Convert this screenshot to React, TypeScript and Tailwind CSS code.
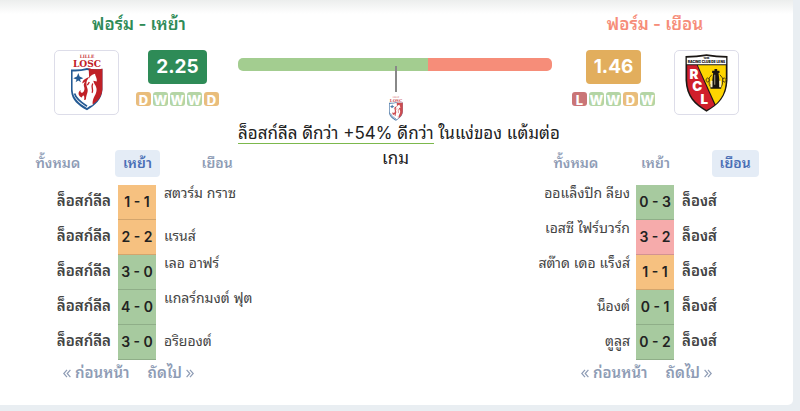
import React, { useState } from 'react';
import clsx from 'clsx';

type Result = 'W' | 'D' | 'L';

interface Match {
  opponent: string;
  score: string;
  result: Result;
  // two-word names sit at the top of the row
  top?: boolean;
}

const homeMatches: Match[] = [
  { opponent: 'สตวร์ม กราซ', score: '1 - 1', result: 'D', top: true },
  { opponent: 'แรนส์', score: '2 - 2', result: 'D' },
  { opponent: 'เลอ อาฟร์', score: '3 - 0', result: 'W', top: true },
  { opponent: 'แกลร์กมงต์ ฟุต', score: '4 - 0', result: 'W', top: true },
  { opponent: 'อริยองต์', score: '3 - 0', result: 'W' },
];

const awayMatches: Match[] = [
  { opponent: 'ออแล็งปิก ลียง', score: '0 - 3', result: 'W', top: true },
  { opponent: 'เอสซี ไฟร์บวร์ก', score: '3 - 2', result: 'L', top: true },
  { opponent: 'สต๊าด เดอ แร็งส์', score: '1 - 1', result: 'D', top: true },
  { opponent: 'น็องต์', score: '0 - 1', result: 'W' },
  { opponent: 'ตูลูส', score: '0 - 2', result: 'W' },
];

const badgeColors: Record<Result, string> = {
  W: 'bg-[#b4d5a5]',
  D: 'bg-[#e9bd7c]',
  L: 'bg-[#ca7577]',
};

const scoreColors: Record<Result, string> = {
  W: 'bg-[#a7ca9f] border-[#8fae88]',
  D: 'bg-[#f6c180] border-[#d3a56d]',
  L: 'bg-[#f6abab] border-[#d39292]',
};

const tabs = ['ทั้งหมด', 'เหย้า', 'เยือน'];

function LilleCrest({ className }: { className?: string }) {
  return (
    <svg viewBox="33 14 92 170" className={className} role="img" aria-label="LOSC">
      <text x="79" y="25" textAnchor="middle" fontSize="13" fontWeight="700" fill="#c8363a" fontFamily="DejaVu Serif, serif">LILLE</text>
      <text x="79" y="53" textAnchor="middle" fontSize="27" fontWeight="700" fill="#c02026" fontFamily="DejaVu Serif, serif">LOSC</text>
      <path d="M31 60Q57 62 79 56Q101 62 125 58V120C124 150 104 166 79 182C50 166 32 150 31 120Z" fill="#245a94" />
      <path d="M36 66Q58 67 79 62Q101 67 120 65V120C119 146 102 160 79 175C54 160 37 146 36 120Z" fill="#fff" />
      <path d="M79 56Q101 62 125 58V120C123 148 104 160 90 168L84 58Z" fill="#c02026" />
      <path d="M53 71L57 81L68 86L58 90L61 98L53 93L45 98L48 90L38 86L49 81Z" fill="#245a94" />
      <path d="M84 90C86 80 94 76 103 73C103 80 110 86 108 96L98 94C99 104 111 112 107 126C104 140 94 146 96 166L84 170C92 150 86 142 79 136C80 118 72 108 84 90Z" fill="#fff" />
      <path d="M88 82C75 92 76 104 80 116C84 128 76 134 76 150L70 151C74 138 66 132 64 144C53 140 50 128 60 121C57 132 67 131 70 124C76 113 63 108 74 96L65 102C65 91 77 86 88 82Z" fill="#c02026" />
      <path d="M96 102C90 114 100 122 94 130M86 98L80 107" fill="none" stroke="#c02026" strokeWidth="4" />
      <path d="M42 132C46 148 62 159 79 170" fill="none" stroke="#245a94" strokeWidth="5" />
    </svg>
  );
}

function LensCrest({ className }: { className?: string }) {
  return (
    <svg viewBox="41 16 128 174" className={className} role="img" aria-label="Racing Club de Lens">
      <path d="M42 22Q75 22 105 17Q135 22 168 22V95C166 145 140 170 105 189C70 170 44 145 42 95Z" fill="#1b1714" />
      <path d="M46 27Q76 27 105 22Q134 27 164 27V47H46Z" fill="#fff" />
      <path d="M47 50H76L129 169Q118 178 105 184C72 166 48 140 47 95Z" fill="#d01f2b" />
      <path d="M79 50H163V95C162 132 149 151 132 167Z" fill="#fed500" />
      <text textAnchor="middle" fontWeight="900" fill="#111" fontFamily="Inter, sans-serif">
        <tspan x="105" y="32" fontSize="7">1906</tspan>
        <tspan x="105" y="43" fontSize="10">RACING CLUB DE LENS</tspan>
      </text>
      <text fill="#fff" fontSize="40" fontWeight="900" fontFamily="Inter, sans-serif" textAnchor="middle">
        <tspan x="67" y="90">R</tspan>
        <tspan x="77" y="128">C</tspan>
        <tspan x="98" y="165">L</tspan>
      </text>
      <path d="M129 61H137V66H144V73H141L145 106H149V120H117V106H121L125 73H122V66H129Z" fill="#191510" />
      <path d="M121 78L113 88V107L118 117M145 78L153 88V107L148 117M108 87L115 94L108 101L103 94ZM158 87L165 94L158 101L153 94Z" fill="none" stroke="#5a480e" strokeWidth="3" />
      <path d="M117 96H123V116H117ZM143 96H149V116H143ZM129 78H131V108H129Z" fill="#f8edc0" />
    </svg>
  );
}

function FormBadges({ form }: { form: Result[] }) {
  return (
    <div className="mt-2 flex gap-0.5">
      {form.map((r, i) => (
        <span
          key={i}
          className={clsx('flex h-3.5 w-[15px] items-center justify-center rounded-[3px] pt-0.5 text-[13px] leading-none font-extrabold text-white', badgeColors[r])}>
          {r}
        </span>
      ))}
    </div>
  );
}

function Crest({ children }: { children: React.ReactNode }) {
  return (
    <div className="flex h-[65px] w-[65px] shrink-0 items-center justify-center rounded-[5px] border border-[#dddde9] bg-white">
      {children}
    </div>
  );
}

function Chevrons({ flip }: { flip?: boolean }) {
  return (
    <svg width="8" height="9" viewBox="0 0 8 9" fill="none" stroke="currentColor" strokeWidth="1.2" className={clsx(flip && 'rotate-180')} aria-hidden="true">
      <path d="M4 .8L.8 4.5L4 8.2M7.4 .8L4.2 4.5L7.4 8.2" />
    </svg>
  );
}

interface MatchPanelProps {
  team: string;
  matches: Match[];
  initialTab: number;
  side: 'home' | 'away';
}

function MatchPanel({ team, matches, initialTab, side }: MatchPanelProps) {
  const [active, setActive] = useState(initialTab);
  const home = side === 'home';

  return (
    <div>
      <div className={clsx('grid grid-cols-3', home ? 'ml-[18px] -mr-[19px]' : '-ml-[17px] mr-[18px]')} role="tablist">
        {tabs.map((tab, i) => (
          <button
            key={tab}
            type="button"
            role="tab"
            aria-selected={active === i}
            onClick={() => setActive(i)}
            className={clsx(
              'h-[27px] justify-self-center rounded px-2 pb-0.5 text-sm leading-5 font-semibold whitespace-nowrap',
              active === i ? 'bg-[#e4ecf6] text-[#4a6fb5]' : 'text-[#8e9cb5]'
            )}>
            {tab}
          </button>
        ))}
      </div>

      <table className={clsx('mt-2 w-[256px] table-fixed border-separate border-spacing-0', !home && '-ml-4')}>
        <tbody>
          {matches.map((match, i) => {
            const opponent = (
              <td className={clsx('h-[35px] p-0 text-sm leading-4 whitespace-nowrap text-[#444]', match.top ? 'align-top' : 'pb-1 align-middle', home ? 'pl-2' : 'w-[99px] pr-1.5 text-right')}>
                {match.opponent}
              </td>
            );
            const own = (
              <td className={clsx('p-0 pb-1 text-[15px] leading-4 font-semibold whitespace-nowrap text-[#444]', home ? 'w-[118px] pr-[7px] text-right' : 'pl-2')}>
                {team}
              </td>
            );
            return (
              <tr key={i}>
                {home ? own : opponent}
                <td className={clsx('w-[38px] border-b p-0 text-center text-sm font-semibold whitespace-nowrap text-[#222]', scoreColors[match.result])}>
                  {match.score}
                </td>
                {home ? opponent : own}
              </tr>
            );
          })}
        </tbody>
      </table>

      <div className={clsx('mt-[3px] flex gap-[18px] text-[15px] leading-5 font-semibold text-[#8e9cb5]', home ? 'pl-[63px]' : 'pl-7')}>
        <button type="button" className="flex items-center gap-1">
          <Chevrons />
          ก่อนหน้า
        </button>
        <button type="button" className="flex items-center gap-1">
          ถัดไป
          <Chevrons flip />
        </button>
      </div>
    </div>
  );
}

export default function App() {
  return (
    <main className="min-h-screen bg-[#e9eef2] pr-[7px] font-['Inter','Noto_Sans_Thai_Looped','Loma','Waree','Tahoma','Noto_Sans',sans-serif]">
      <section className="grid grid-cols-[238px_minmax(0,1fr)_240px] rounded-br-[5px] bg-white bg-linear-to-b from-[#eceeed] to-white to-[14px] pb-[22px]">
        {/* Home side */}
        <div>
          <div className="pt-[14px]">
            <h2 className="pl-10 text-center text-[17px] leading-5 font-semibold text-[#2e8b57]">ฟอร์ม - เหย้า</h2>
            <div className="mt-4 flex h-[100px] pl-[54px]">
              <Crest>
                <LilleCrest className="h-[57px] w-8" />
              </Crest>
              <div className="ml-[17px] flex flex-col items-center">
                <span className="flex h-[34px] items-center rounded bg-[#2e8b57] px-2 text-[19px] font-bold text-white">2.25</span>
                <FormBadges form={['D', 'W', 'W', 'W', 'D']} />
              </div>
            </div>
          </div>
          <MatchPanel team="ล็อสก์ลีล" matches={homeMatches} initialTab={1} side="home" />
        </div>

        {/* Comparison bar */}
        <div className="pt-[58px]">
          <div className="mr-px flex h-[13px] overflow-hidden rounded-[5px]">
            <div className="bg-[#a3cd90]" style={{ width: `${(2.25 / (2.25 + 1.46)) * 100}%` }} />
            <div className="flex-1 bg-[#f68d79]" />
          </div>
          <div className="relative mx-auto -mt-[5px] h-[26px] w-0.5 bg-[#888]" />
          <LilleCrest className="mx-auto mt-1 h-[25px] w-3.5 opacity-80" />
          <p className="text-center text-[17px] leading-[25px] whitespace-nowrap text-[#222]">
            <span className="border-b border-[#7cb84c]">ล็อสก์ลีล ดีกว่า +54% ดีกว่า</span> ในแง่ของ แต้มต่อ
            <br />
            เกม
          </p>
        </div>

        {/* Away side */}
        <div>
          <div className="pt-[14px]">
            <h2 className="pr-9 text-center text-[17px] leading-5 font-semibold text-[#f68d79]">ฟอร์ม - เยือน</h2>
            <div className="mt-4 flex h-[100px] justify-end pr-[54px]">
              <div className="mr-[19px] flex flex-col items-center">
                <span className="flex h-[34px] items-center rounded bg-[#e2ae5d] px-2 text-[19px] font-bold text-white">1.46</span>
                <FormBadges form={['L', 'W', 'W', 'D', 'W']} />
              </div>
              <Crest>
                <LensCrest className="h-[58px] w-[43px]" />
              </Crest>
            </div>
          </div>
          <MatchPanel team="ล็องส์" matches={awayMatches} initialTab={2} side="away" />
        </div>
      </section>
    </main>
  );
}
